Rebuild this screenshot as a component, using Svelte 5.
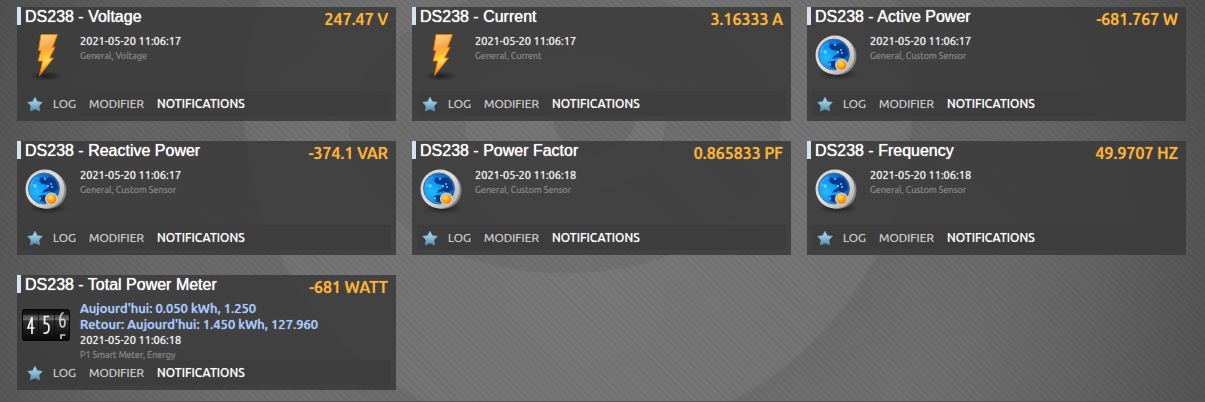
<script>
  const cards = [
    { name: 'DS238 - Voltage', value: '247.47 V', time: '2021-05-20 11:06:17', type: 'General, Voltage', icon: 'bolt' },
    { name: 'DS238 - Current', value: '3.16333 A', time: '2021-05-20 11:06:17', type: 'General, Current', icon: 'bolt' },
    { name: 'DS238 - Active Power', value: '-681.767 W', time: '2021-05-20 11:06:17', type: 'General, Custom Sensor', icon: 'globe' },
    { name: 'DS238 - Reactive Power', value: '-374.1 VAR', time: '2021-05-20 11:06:17', type: 'General, Custom Sensor', icon: 'globe' },
    { name: 'DS238 - Power Factor', value: '0.865833 PF', time: '2021-05-20 11:06:18', type: 'General, Custom Sensor', icon: 'globe' },
    { name: 'DS238 - Frequency', value: '49.9707 HZ', time: '2021-05-20 11:06:18', type: 'General, Custom Sensor', icon: 'globe' },
    { name: 'DS238 - Total Power Meter', value: '-681 WATT', time: '2021-05-20 11:06:18', type: 'P1 Smart Meter, Energy', icon: 'counter',
      usage: ["Aujourd'hui: 0.050 kWh, 1.250", "Retour: Aujourd'hui: 1.450 kWh, 127.960"] }
  ];
</script>

<svg class="defs" width="0" height="0" aria-hidden="true">
  <defs>
    <linearGradient id="bolt" x1="0" y1="0" x2="0.2" y2="1">
      <stop offset="0" stop-color="#ffd98c" /><stop offset="0.4" stop-color="#f8a548" />
      <stop offset="0.52" stop-color="#ffb928" /><stop offset="0.7" stop-color="#ffdc57" /><stop offset="1" stop-color="#f57c00" />
    </linearGradient>
    <radialGradient id="shade"><stop offset="0" stop-color="#111" stop-opacity="0.7" /><stop offset="1" stop-color="#111" stop-opacity="0" /></radialGradient>
    <linearGradient id="rim" x1="0" y1="0" x2="1" y2="1">
      <stop offset="0" stop-color="#cfcfcf" /><stop offset="0.5" stop-color="#dedede" /><stop offset="1" stop-color="#a8a8a8" />
    </linearGradient>
    <radialGradient id="sea" cx="0.25" cy="0.6" r="0.8">
      <stop offset="0" stop-color="#20bdff" /><stop offset="0.55" stop-color="#0a8af0" /><stop offset="1" stop-color="#0752ae" />
    </radialGradient>
    <radialGradient id="lamp" cx="0.4" cy="0.35" r="0.7">
      <stop offset="0" stop-color="#ffe071" /><stop offset="0.6" stop-color="#ff9c0a" /><stop offset="1" stop-color="#e87500" />
    </radialGradient>
    <linearGradient id="drum" x1="0" y1="0" x2="0" y2="1">
      <stop offset="0" stop-color="#0c0c0c" /><stop offset="0.16" stop-color="#1c1c1c" /><stop offset="0.18" stop-color="#444" /><stop offset="0.34" stop-color="#707070" />
      <stop offset="0.36" stop-color="#2e2e2e" /><stop offset="1" stop-color="#080808" />
    </linearGradient>
    <linearGradient id="star" x1="0" y1="0" x2="0" y2="1">
      <stop offset="0" stop-color="#b9dcec" /><stop offset="0.5" stop-color="#8dbdd5" /><stop offset="1" stop-color="#4e87a6" />
    </linearGradient>
  </defs>
</svg>

<main>
  <svg class="backdrop" viewBox="0 0 1205 402" preserveAspectRatio="xMidYMid slice" aria-hidden="true">
    <defs>
      <pattern id="lines" width="5" height="5" patternUnits="userSpaceOnUse" patternTransform="rotate(-45)">
        <rect width="2" height="5" fill="#000" fill-opacity="0.05" />
      </pattern>
      <radialGradient id="glow" gradientUnits="userSpaceOnUse" cx="590" cy="280" r="720">
        <stop offset="0" stop-color="#797979" /><stop offset="0.45" stop-color="#737373" /><stop offset="0.7" stop-color="#646464" /><stop offset="1" stop-color="#484848" />
      </radialGradient>
      <radialGradient id="halo" gradientUnits="userSpaceOnUse" cx="578" cy="105" r="460">
        <stop offset="0.722" stop-color="#000" stop-opacity="0" /><stop offset="0.73" stop-color="#000" stop-opacity="0.07" /><stop offset="1" stop-color="#000" stop-opacity="0" />
      </radialGradient>
    </defs>
    <rect width="1205" height="402" fill="url(#glow)" />
    <rect width="1205" height="402" fill="url(#halo)" />
    <path d="M349 130A216 144 0 1 0 781 130A216 144 0 1 0 349 130M465 125A100 70 0 1 1 665 125A100 70 0 1 1 465 125" fill="#000" fill-opacity="0.05" fill-rule="evenodd" />
    <ellipse cx="594" cy="118" rx="41" ry="36" fill="#000" fill-opacity="0.07" />
    <rect width="1205" height="402" fill="url(#lines)" />
  </svg>
  <div class="grid">
    {#each cards as card}
      <article class="card">
        <header>
          <h2>{card.name}</h2>
          <span class="value">{card.value}</span>
        </header>
        <div class="body" class:meter={card.usage}>
          {#if card.icon === 'bolt'}
            <svg class="icon" viewBox="0 0 48 48" aria-hidden="true">
              <ellipse cx="24" cy="44" rx="17" ry="5" fill="url(#shade)" />
              <path d="M19 2.500H35.500L30.500 15.500H33L27.500 26H31.500L17.500 43.500L20.500 29H16L19 18.500H16.500Z" fill="url(#bolt)" stroke="#df7200" />
            </svg>
          {:else if card.icon === 'globe'}
            <svg class="icon" viewBox="0 0 48 48" aria-hidden="true">
              <ellipse cx="26" cy="42" rx="20" ry="6" fill="url(#shade)" />
              <circle cx="25.500" cy="24" r="19" fill="#858585" />
              <circle cx="23" cy="23" r="19.500" fill="url(#rim)" />
              <circle cx="22" cy="22.500" r="15.500" fill="url(#sea)" stroke="#4f6f8d" />
              <path d="M19 11Q24 14 27 11Q33 12 35 18L36 23L31 27L27 25L20 27L22 24L26 22L27 19L20 18L17 15ZM16 31L20 29L23 29L26 32L24 37L18 35L19 33Z" fill="#073987" />
              <g fill="#8bdcff" fill-opacity="0.85"><circle cx="23" cy="13" r="1" /><circle cx="13" cy="20" r="1.500" /><circle cx="26" cy="20" r="1" /><circle cx="29" cy="18" r="1" /><circle cx="30" cy="21" r="1" /><circle cx="18" cy="32" r="1" /></g>
              <path d="M9 21Q9 14 16 11M10 19H15" fill="none" stroke="#8cdaff" stroke-opacity="0.5" />
              <circle cx="29.500" cy="33" r="6.500" fill="#cfc9bf" />
              <circle cx="29.500" cy="33" r="4.800" fill="url(#lamp)" />
            </svg>
          {:else}
            <svg class="icon" viewBox="0 0 48 48" aria-hidden="true">
              <rect x="0.500" y="8.500" width="47" height="31" rx="2" fill="url(#drum)" stroke="#050505" />
              <path d="M16.500 10V38M32.500 10V38" stroke="#050505" stroke-opacity="0.7" />
              <g fill="none" stroke="#f2f2f2" stroke-width="1.700">
                <path d="M10 33V16L6 27H12.500" />
                <path d="M27 15.500H22.500V22.500Q27 21.500 27 27Q27 33 21.500 32" />
                <path d="M41.500 11.500Q38 13 38 20Q38 26 40.500 26T43 21Q43 17 38 19M43.500 34H39V38" stroke-opacity="0.8" />
              </g>
            </svg>
          {/if}
          <div class="info">
            {#each card.usage ?? [] as line}<strong>{line}</strong>{/each}
            <time>{card.time}</time>
            <span class="type">{card.type}</span>
          </div>
        </div>
        <footer>
          <button class="favorite" aria-label="Favorite">
            <svg viewBox="0 0 16 16" aria-hidden="true"><path d="M8 1L10.400 5.500L15.500 6.300L12 10L12.700 15L8 13L3.300 15L4 10L0.500 6.300L5.600 5.500Z" fill="url(#star)" stroke="#649bb7" stroke-width="0.600" stroke-linejoin="round" /></svg>
          </button>
          <a href="#log">LOG</a>
          <a href="#edit">MODIFIER</a>
          <a class="active" href="#notifications">NOTIFICATIONS</a>
        </footer>
      </article>
    {/each}
  </div>
</main>

<style>
  :global(body) { margin: 0; background: #666; }
  .defs { position: absolute; }
  main { position: relative; min-height: 100vh; box-sizing: border-box; padding: 7px 19px 11px 17px; border-bottom: 1px solid #555; font-family: Ubuntu, "Noto Sans", sans-serif; }
  .backdrop { position: absolute; inset: 0; width: 100%; height: 100%; }
  .grid { position: relative; display: grid; grid-template-columns: repeat(3, minmax(0, 1fr)); gap: 20px 16px; }
  .card { display: flex; flex-direction: column; min-height: 114px; box-sizing: border-box; padding-bottom: 5px; background: rgba(58, 58, 58, 0.86); }
  header { display: flex; align-items: flex-start; justify-content: space-between; height: 22px; padding-right: 8px; }
  h2 { box-sizing: border-box; height: 18px; margin: 0; padding: 1px 0 0 4px; border-left: 4px solid #d4e3f2; color: #fff; font: 400 16px/18px "Liberation Sans", Arial, sans-serif; text-shadow: 0 0 1px #fff; }
  .value { color: #ffb436; font-size: 16px; font-weight: 500; line-height: 24px; text-shadow: 0 0 1px #ffb436; }
  .body { display: flex; gap: 10px; padding: 3px 5px 0; height: 59px; }
  .icon { width: 48px; height: 48px; flex: none; }
  .info { display: flex; flex-direction: column; padding-top: 1px; }
  time { color: #f1f1f1; font-size: 11px; line-height: 16px; text-shadow: 0 0 1px #f1f1f1; }
  .type { color: #8a8a8a; font-size: 9px; line-height: 14px; text-shadow: 0 0 1px #777; }
  strong { color: #a9caff; font-size: 13px; font-weight: 500; line-height: 16px; text-shadow: 0 0 1px #a9caff; }
  .meter { height: 60px; }
  .meter .icon { margin-top: 1px; }
  .meter .info { padding-top: 0; }
  footer { display: flex; align-items: center; gap: 13px; height: 25px; margin: 0 5px; padding-left: 5px; background: #3d3d3d; }
  .favorite { display: block; width: 16px; height: 16px; margin-right: -3px; padding: 0; border: 0; background: none; }
  .favorite svg { display: block; width: 16px; height: 16px; }
  a { color: #d2d2d2; font-size: 12px; line-height: 24px; text-decoration: none; text-shadow: 0 0 1px #999; }
  .active { color: #fff; font-weight: 500; }
</style>
